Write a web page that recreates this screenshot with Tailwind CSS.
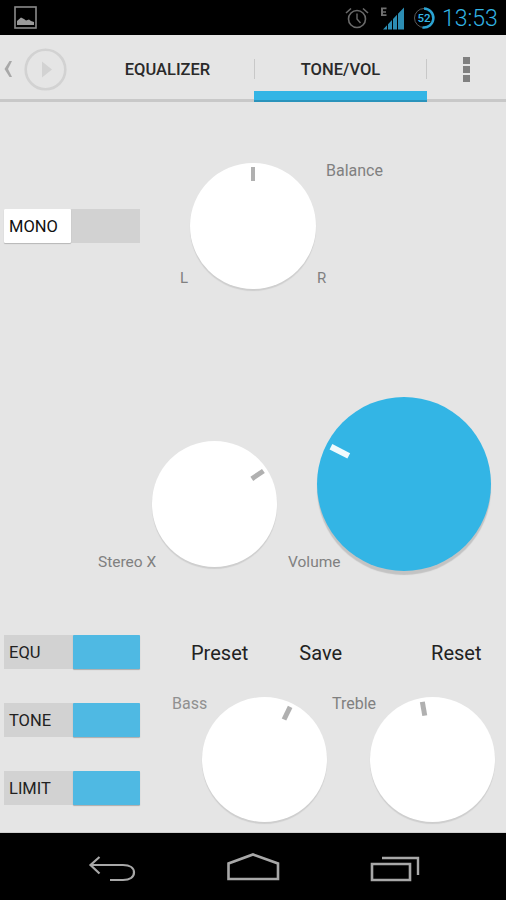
<!DOCTYPE html>
<html lang="en">
<head>
  <meta charset="UTF-8" />
  <title>Tone / Vol</title>
  <script src="https://cdn.jsdelivr.net/npm/@tailwindcss/browser@4"></script>
</head>
<body class="bg-black font-[family-name:Roboto,sans-serif]">
<div class="w-[506px] h-[900px] flex flex-col overflow-hidden">

  <!-- STATUS BAR -->
  <div class="h-[35px] bg-black flex items-center shrink-0">
    <svg class="ml-[14px]" width="23" height="23" viewBox="0 0 23 23">
      <rect x="1" y="1" width="21" height="21" fill="none" stroke="#8a8a8a" stroke-width="1.6"/>
      <path d="M3 19v-4l4-3.500 3 1.500 2 1.500 3-1 2 1.500 3 1v3z" fill="#9a9a9a"/>
    </svg>
    <svg class="ml-[308px]" width="24" height="24" viewBox="0 0 24 24" fill="none" stroke="#6a6a6a">
      <circle cx="12" cy="13" r="8.500" stroke-width="1.600"/>
      <path d="M12 7.500V13l3.500 4" stroke-width="1.400"/>
      <path d="M1 7l5-4.500M23 7l-5-4.500" stroke-width="1.600"/>
    </svg>
    <svg class="ml-[11px]" width="27" height="24" viewBox="0 0 27 24">
      <path d="M3 23.500L7 19.300V23.500zM8 18.300L12 14V23.500H8zM13 13L17 8.800V23.500H13zM18 7.800L24 1.500V23.500H18z" fill="#2c8db3"/>
      <path d="M1 1.500h5.500v1.700h-3.500v2h3v1.600h-3v1.500h3.500v1.700h-5.500z" fill="#6f6f6f"/>
    </svg>
    <svg class="ml-[5px]" width="24" height="24" viewBox="0 0 24 24">
      <circle cx="12" cy="12" r="9.500" fill="none" stroke="#5a5a5a" stroke-width="1"/>
      <path d="M12 2.500A9.500 9.500 0 1 1 10.500 21.400" fill="none" stroke="#2ba3d3" stroke-width="2.500"/>
      <text x="12" y="16" text-anchor="middle" font-family="Roboto" font-size="11.500" font-weight="500" fill="#33b5e5">52</text>
    </svg>
    <span class="ml-[6px] pt-[1px] text-[23px] leading-none font-light text-[#33b5e5]">13:53</span>
  </div>

  <!-- TABS -->
  <header class="h-[67px] bg-[#e5e5e5] border-b-[3px] border-[#c8c8c8] flex shrink-0 relative">
    <div class="w-[81px] flex items-center pl-[3px] pt-[4px]">
      <svg width="10" height="16" viewBox="0 0 10 16"><path d="M6.500 0H9L5 8l4 8H6.500L1.500 8z" fill="#a8a8a8"/></svg>
      <svg class="ml-[10.500px]" width="43" height="43" viewBox="0 0 43 43">
        <circle cx="21.500" cy="21.500" r="19.800" fill="none" stroke="#d2d2d2" stroke-width="2.600"/>
        <path d="M18 13.500l10 8-10 8z" fill="#d2d2d2"/>
      </svg>
    </div>
    <div class="w-[173px] flex items-center justify-center pt-[7px]">
      <span class="text-[16.500px] font-medium text-[#2a2a2a]">EQUALIZER</span>
    </div>
    <div class="w-[173px] flex items-center justify-center pt-[7px] relative">
      <span class="absolute left-0 top-[24px] w-px h-[20px] bg-[#c8c8c8]"></span>
      <span class="absolute right-0 top-[24px] w-px h-[20px] bg-[#c8c8c8]"></span>
      <span class="text-[16.500px] font-medium text-[#2a2a2a]">TONE/VOL</span>
      <span class="absolute left-0 right-0 bottom-[-3px] h-[11px] bg-[#33b5e5] border-b-2 border-[#2a93bb]"></span>
    </div>
    <div class="flex-1 flex flex-col gap-[2px] items-start pl-[36px] pt-[22px]">
      <span class="w-[7px] h-[7px] bg-[#808080]"></span>
      <span class="w-[7px] h-[7px] bg-[#808080]"></span>
      <span class="w-[7px] h-[7px] bg-[#808080]"></span>
    </div>
  </header>

  <!-- CONTENT -->
  <main class="flex-1 bg-[#e5e5e5] border-b border-[#d0d0d0]">

    <!-- Balance row -->
    <section class="mt-[61px] flex items-center">
      <div class="ml-[4px] w-[136px] h-[34px] bg-[#d2d2d2]">
        <div class="w-[67px] h-[34px] bg-white rounded-[1px] shadow-[0_1px_1px_rgba(0,0,0,0.2)] flex items-center pl-[5px] pt-[2px] text-[16.500px] text-[#111]">MONO</div>
      </div>
      <div class="ml-[50px] relative w-[126px] h-[126px] rounded-full bg-white shadow-[0_2px_1px_rgba(0,0,0,0.1)]">
        <div class="absolute inset-0">
          <div class="mx-auto mt-[4px] w-[4px] h-[14px] bg-[#b0b0b0]"></div>
        </div>
        <span class="absolute left-[136px] top-[-1px] text-[16px] leading-[18px] text-[#808080]">Balance</span>
        <span class="absolute left-[-10px] top-[106px] text-[15px] leading-[18px] text-[#808080]">L</span>
        <span class="absolute left-[127px] top-[106px] text-[15px] leading-[18px] text-[#808080]">R</span>
      </div>
    </section>

    <!-- Stereo X / Volume row -->
    <section class="mt-[108px] flex items-start">
      <div class="ml-[152px] mt-[44px] relative w-[125px] h-[126px] rounded-full bg-white shadow-[0_2px_1px_rgba(0,0,0,0.1)]">
        <div class="absolute inset-0 rotate-[56deg]">
          <div class="mx-auto mt-[4px] w-[5px] h-[14px] bg-[#b0b0b0]"></div>
        </div>
        <span class="absolute left-[-54px] top-[112px] text-[15.500px] leading-[18px] text-[#808080]">Stereo X</span>
      </div>
      <div class="ml-[40px] relative w-[174px] h-[174px] rounded-full bg-[#33b5e5] shadow-[0_4px_1px_rgba(0,0,0,0.15)]">
        <div class="absolute inset-0 rotate-[-63deg]">
          <div class="mx-auto mt-[5px] w-[6px] h-[20px] bg-[#f0fafd]"></div>
        </div>
        <span class="absolute left-[-29px] top-[156px] text-[15.500px] leading-[18px] text-[#808080]">Volume</span>
      </div>
    </section>

    <!-- Bottom row -->
    <section class="mt-[64px] flex items-start">
      <div class="ml-[4px] w-[136px] flex flex-col gap-[34px]">
        <div class="h-[34px] bg-[#d2d2d2] flex justify-between items-center pl-[5px] text-[16.500px] text-[#222]">
          <span class="pt-[2px]">EQU</span>
          <span class="w-[67px] h-[34px] bg-[#4fb9e3] rounded-[1px] shadow-[0_1px_1px_rgba(0,0,0,0.25)]"></span>
        </div>
        <div class="h-[34px] bg-[#d2d2d2] flex justify-between items-center pl-[5px] text-[16.500px] text-[#222]">
          <span class="pt-[2px]">TONE</span>
          <span class="w-[67px] h-[34px] bg-[#4fb9e3] rounded-[1px] shadow-[0_1px_1px_rgba(0,0,0,0.25)]"></span>
        </div>
        <div class="h-[34px] bg-[#d2d2d2] flex justify-between items-center pl-[5px] text-[16.500px] text-[#222]">
          <span class="pt-[2px]">LIMIT</span>
          <span class="w-[67px] h-[34px] bg-[#4fb9e3] rounded-[1px] shadow-[0_1px_1px_rgba(0,0,0,0.25)]"></span>
        </div>
      </div>
      <div class="flex-1">
        <div class="h-[34px] flex items-center pt-[1px] text-[20px] text-[#222]">
          <span class="ml-[51px]">Preset</span>
          <span class="ml-[51px]">Save</span>
          <span class="ml-[89px]">Reset</span>
        </div>
        <div class="mt-[28px] flex">
          <div class="ml-[62px] relative w-[125px] h-[125px] rounded-full bg-white shadow-[0_2px_1px_rgba(0,0,0,0.1)]">
            <div class="absolute inset-0 rotate-[26deg]">
              <div class="mx-auto mt-[4px] w-[5px] h-[14px] bg-[#b0b0b0]"></div>
            </div>
            <span class="absolute left-[-30px] top-[-2px] text-[16px] leading-[18px] text-[#909090]">Bass</span>
          </div>
          <div class="ml-[43px] relative w-[125px] h-[125px] rounded-full bg-white shadow-[0_2px_1px_rgba(0,0,0,0.1)]">
            <div class="absolute inset-0 rotate-[-10deg]">
              <div class="mx-auto mt-[4px] w-[5px] h-[14px] bg-[#b0b0b0]"></div>
            </div>
            <span class="absolute left-[-38px] top-[-2px] text-[16px] leading-[18px] text-[#808080]">Treble</span>
          </div>
        </div>
      </div>
    </section>
  </main>

  <!-- NAV BAR -->
  <nav class="h-[67px] bg-black shrink-0">
    <svg width="506" height="67" viewBox="0 0 506 67" fill="none" stroke="#a8a8a8" stroke-width="2.200">
      <path d="M99.500 24L90.500 32l9 8.500M91 32h32c7 0 11 3 11 7.500S130 47 123 47h-13"/>
      <path d="M228.500 46V30.500L253 21.500l25 9V46z" stroke-width="2.600"/>
      <path d="M372 31h38v16h-38z" stroke-width="2.600"/>
      <path d="M382 25h36v17" stroke-width="2.400"/>
    </svg>
  </nav>
</div>
</body>
</html>
